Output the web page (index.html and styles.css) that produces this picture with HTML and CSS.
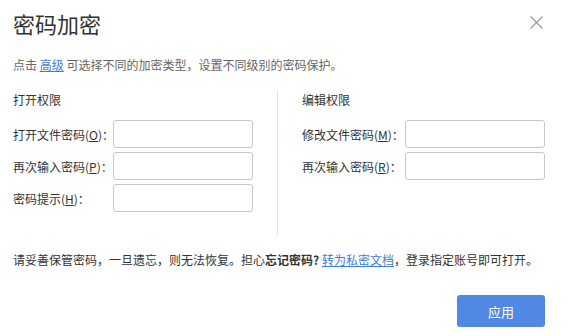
FILE: index.html
```html
<!DOCTYPE html>
<html>
<head>
	<meta charset="utf-8">
	<title>密码加密</title>
	<link rel="stylesheet" href="styles.css">
</head>
<body>
	<div class="dialog">
		<div class="header">
			<h1 class="title">密码加密</h1>
			<a class="close" href="#" title="关闭">
				<svg width="13" height="13" viewBox="0 0 13 13">
					<path d="M0.5 0.5L12.5 12.5M12.5 0.5L0.5 12.5" stroke="#9a9a9a" stroke-width="1.2" fill="none"/>
				</svg>
			</a>
		</div>
		<p class="desc">点击 <a href="#">高级</a> 可选择不同的加密类型，设置不同级别的密码保护。</p>

		<div class="columns">
			<div class="col col-open">
				<div class="col-title">打开权限</div>
				<div class="row">
					<label>打开文件密码(<u>O</u>)：</label>
					<input type="password">
				</div>
				<div class="row">
					<label>再次输入密码(<u>P</u>)：</label>
					<input type="password">
				</div>
				<div class="row">
					<label>密码提示(<u>H</u>)：</label>
					<input type="text">
				</div>
			</div>
			<div class="col col-edit">
				<div class="col-title">编辑权限</div>
				<div class="row">
					<label>修改文件密码(<u>M</u>)：</label>
					<input type="password">
				</div>
				<div class="row">
					<label>再次输入密码(<u>R</u>)：</label>
					<input type="password">
				</div>
			</div>
		</div>

		<p class="note">请妥善保管密码，一旦遗忘，则无法恢复。担心<b>忘记密码?</b> <a href="#">转为私密文档</a>，登录指定账号即可打开。</p>

		<div class="footer">
			<button class="btn-apply">应用</button>
		</div>
	</div>
</body>
</html>
```

FILE: styles.css
```css
body{
	margin: 0;
	background: #fff;
	font-family: "Noto Sans CJK SC", "Liberation Sans", sans-serif;
	font-size: 12px;
	color: #333;
}
.dialog{
	width: 574px;
	height: 336px;
	padding: 8px 29px 0 13px;
	box-sizing: border-box;
}
.header{
	display: flex;
	justify-content: space-between;
	align-items: flex-start;
	height: 30px;
}
.title{
	margin: 0;
	font-size: 22px;
	font-weight: normal;
	line-height: 30px;
	color: #333;
}
.close{
	display: block;
	width: 13px;
	height: 13px;
	margin: 8px 2px 0 0;
}
.close svg{
	display: block;
}
.desc{
	margin: 17px 0 0;
	line-height: 20px;
	color: #666;
}
a{
	color: #3b7ddd;
	text-decoration: underline;
}
.columns{
	display: flex;
	margin-top: 15px;
	height: 145px;
}
.col-open{
	width: 264px;
	border-right: 1px solid #e4e4e4;
}
.col-edit{
	padding-left: 24px;
	flex: 1;
}
.col-title{
	line-height: 20px;
	margin-bottom: 10px;
	color: #333;
}
.row{
	display: flex;
	align-items: center;
	height: 28px;
	margin-bottom: 4px;
}
.row label{
	width: 100px;
	color: #333;
	white-space: nowrap;
}
.col-edit .row label{
	width: 103px;
}
.row input{
	width: 140px;
	height: 28px;
	box-sizing: border-box;
	border: 1px solid #c8c8c8;
	border-radius: 3px;
	outline: none;
	padding: 0 6px;
}
.note{
	margin: 15px 0 0;
	line-height: 20px;
	color: #333;
}
.note b{
	font-weight: bold;
}
.footer{
	display: flex;
	justify-content: flex-end;
	margin-top: 25px;
}
.btn-apply{
	width: 88px;
	height: 32px;
	border: none;
	border-radius: 3px;
	background: #5088e3;
	color: #fff;
	font-family: inherit;
	font-size: 13px;
	cursor: pointer;
}
```
